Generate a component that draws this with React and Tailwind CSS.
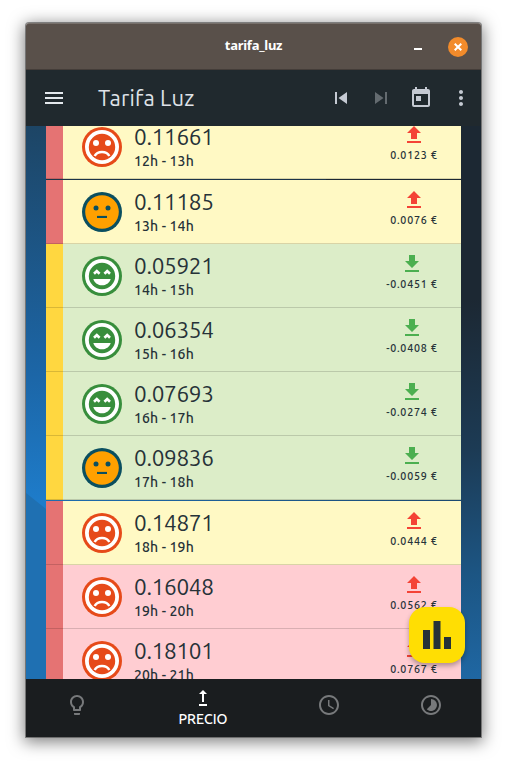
import { MdMenu, MdSkipPrevious, MdSkipNext, MdToday, MdMoreVert, MdLightbulbOutline, MdAccessTime, MdTimelapse } from "react-icons/md";

const HOURS = [
  { price: "0.11661", time: "12h - 13h", delta: "0.0123 €", face: "sad", up: true, strip: "bg-[#e57373]", bg: "bg-[#fff9c4]" },
  { price: "0.11185", time: "13h - 14h", delta: "0.0076 €", face: "neutral", up: true, strip: "bg-[#e57373]", bg: "bg-[#fff9c4]", gap: true },
  { price: "0.05921", time: "14h - 15h", delta: "-0.0451 €", face: "happy", strip: "bg-[#ffd740]", bg: "bg-[#dcedc8]" },
  { price: "0.06354", time: "15h - 16h", delta: "-0.0408 €", face: "happy", strip: "bg-[#ffd740]", bg: "bg-[#dcedc8]" },
  { price: "0.07693", time: "16h - 17h", delta: "-0.0274 €", face: "happy", strip: "bg-[#ffd740]", bg: "bg-[#dcedc8]" },
  { price: "0.09836", time: "17h - 18h", delta: "-0.0059 €", face: "neutral", strip: "bg-[#ffd740]", bg: "bg-[#dcedc8]" },
  { price: "0.14871", time: "18h - 19h", delta: "0.0444 €", face: "sad", up: true, strip: "bg-[#e57373]", bg: "bg-[#fff9c4]", gap: true },
  { price: "0.16048", time: "19h - 20h", delta: "0.0562 €", face: "sad", up: true, strip: "bg-[#e57373]", bg: "bg-[#ffcdd2]" },
  { price: "0.18101", time: "20h - 21h", delta: "0.0767 €", face: "sad", up: true, strip: "bg-[#e57373]", bg: "bg-[#ffcdd2]" },
];

function Face({ type }) {
  if (type === "neutral") {
    return (
      <svg className="size-10 shrink-0" viewBox="-20 -20 40 40">
        <circle r="20" fill="#0a4f60" />
        <circle r="16.8" fill="#ffa000" />
        <circle cx="-6" cy="-4" r="2.5" fill="#0a4f60" />
        <circle cx="6" cy="-4" r="2.5" fill="#0a4f60" />
        <rect x="-5" y="3.9" width="10" height="2.1" fill="#0a4f60" />
      </svg>
    );
  }
  const color = type === "sad" ? "#e64a19" : "#388e3c";
  return (
    <svg className="size-10 shrink-0" viewBox="-20 -20 40 40">
      <circle r="20" fill={color} />
      <circle r="17" fill="#fff" />
      <circle r="13.2" fill={color} />
      {type === "sad" ? (
        <>
          <circle cx="-6" cy="-4" r="3" fill="#fff" />
          <circle cx="6" cy="-4" r="3" fill="#fff" />
          <path d="M-7.3 9C-4.6 3.6 4.6 3.6 7.3 9" fill="none" stroke="#fff" strokeWidth="2.6" />
        </>
      ) : (
        <>
          <path d="M-8.9-3.2-5.2-6.7-1.5-3.2-3.3-1.2-5.2-3-7.1-1.2ZM1.5-3.2 5.2-6.7 8.9-3.2 7.1-1.2 5.2-3 3.3-1.2Z" fill="#fff" />
          <path d="M-8.7 3H8.7C7.4 7 4 9.3 0 9.3S-7.4 7-8.7 3Z" fill="#fff" />
        </>
      )}
    </svg>
  );
}

function Trend({ up }) {
  return (
    <svg className={up ? "size-6 text-[#f44336]" : "size-6 text-[#4caf50]"} viewBox="0 0 24 24" fill="currentColor">
      <path d={up ? "M9 16V10H5L12 3L19 10H15V16H9M5 20V18H19V20H5Z" : "M5 20H19V18H5V20M19 9H15V3H9V9H5L12 16L19 9Z"} />
    </svg>
  );
}

function Row({ item }) {
  return (
    <div className={item.gap ? "mt-px flex h-16 shrink-0" : "flex h-16 shrink-0"}>
      <div className={`w-[17px] border-b border-black/15 ${item.strip}`} />
      <div className={`flex flex-1 justify-between border-b border-black/15 pl-[19px] pr-[23.5px] ${item.bg}`}>
        <div className="flex pt-3">
          <Face type={item.face} />
          <div className="-mt-0.5 ml-3 text-[#263238]">
            <div className="h-6 whitespace-nowrap text-[22.5px] leading-6 tracking-[-0.3px]">{item.price}</div>
            <div className="mt-[2px] h-5 whitespace-nowrap text-[14px] font-medium leading-5 tracking-[0.15px]">{item.time}</div>
          </div>
        </div>
        <div className="flex flex-col items-center pt-2">
          <Trend up={item.up} />
          <div className="whitespace-nowrap text-[10.7px] font-medium leading-4 tracking-[0.75px] text-[#263238]">{item.delta}</div>
        </div>
      </div>
    </div>
  );
}

function Wallpaper() {
  return (
    <svg className="absolute inset-0 h-full w-full" viewBox="0 0 455 553" preserveAspectRatio="none">
      <defs>
        <linearGradient id="left" x1="0" y1="0" x2="0" y2="1">
          <stop offset="0" stopColor="#1d4565" />
          <stop offset="0.45" stopColor="#1c66a7" />
          <stop offset="0.68" stopColor="#1e7cca" />
          <stop offset="1" stopColor="#1e7cca" />
        </linearGradient>
        <linearGradient id="right" gradientUnits="userSpaceOnUse" x1="400" y1="180" x2="455" y2="553">
          <stop offset="0" stopColor="#1c2833" />
          <stop offset="0.4" stopColor="#1c3b55" />
          <stop offset="0.72" stopColor="#1c5583" />
          <stop offset="1" stopColor="#1f67a3" />
        </linearGradient>
        <linearGradient id="gap" x1="0" y1="0" x2="1" y2="0">
          <stop offset="0" stopColor="#1e6eb0" />
          <stop offset="1" stopColor="#1c4a70" />
        </linearGradient>
      </defs>
      <path d="M0 0H455V553H0Z" fill="url(#left)" />
      <path d="M20 0H455V553H20Z" fill="url(#right)" />
      <path d="M20 0H300V60H20Z" fill="#1c3448" />
      <path d="M20 370H435V380H20Z" fill="url(#gap)" />
      <path d="M0 367 20 383V553H0Z" fill="#1f70b2" />
    </svg>
  );
}

export default function App() {
  return (
    <div className="h-[766px] w-[507px] overflow-hidden bg-white pl-[26px] pt-[23px] font-['Ubuntu','Noto_Sans',sans-serif]">
      <div className="flex h-[714px] w-[455px] flex-col rounded-t-[3px] shadow-[0_0_0_1px_rgba(75,75,75,0.6),0_3px_16px_2px_rgba(0,0,0,0.5)]">
        <header className="flex h-[47px] shrink-0 items-center rounded-t-[3px] border-b border-t border-b-[#443d39] border-t-[#77706b] bg-[#59504a] pr-[13px]">
          <h1 className="-mt-0.5 flex-1 pl-[67px] text-center font-['Noto_Sans'] text-[13px] font-bold tracking-[-0.25px] text-white">tarifa_luz</h1>
          <div className="mr-[26px] mt-[5px] h-0.5 w-2 bg-white" />
          <div className="flex size-5 items-center justify-center rounded-full bg-[#f28b2b]">
            <svg className="size-2" viewBox="0 0 8 8" stroke="#fff" strokeWidth="2">
              <path d="M.7.7 7.3 7.3M7.3.7.7 7.3" />
            </svg>
          </div>
        </header>
        <nav className="flex h-14 shrink-0 items-center bg-[#20292e] pl-4 pr-2 text-[#c5cad3]">
          <MdMenu className="size-6 text-[#e3e8ed]" />
          <h2 className="ml-8 flex-1 whitespace-nowrap text-[22px] leading-7 tracking-[0.15px] text-[#dfe2e8]">Tarifa Luz</h2>
          <MdSkipPrevious className="mr-4 size-6" />
          <MdSkipNext className="mr-4 size-6 text-[#646b70]" />
          <MdToday className="mr-4 size-6" />
          <MdMoreVert className="size-6" />
        </nav>
        <main className="relative h-[553px] shrink-0">
          <Wallpaper />
          <div className="relative h-full overflow-hidden px-5">
            <div className="-mt-[11px] flex flex-col">
              {HOURS.map((h) => <Row key={h.time} item={h} />)}
            </div>
          </div>
          <button className="absolute bottom-4 right-4 flex size-14 items-center justify-center rounded-2xl bg-[#ffde03] shadow-[0_3px_5px_rgba(0,0,0,0.3)]">
            <svg className="h-7 w-7" viewBox="0 0 28 28" fill="#263238">
              <path d="M0 9H7V28H0ZM10.5 0H17.5V28H10.5ZM21 16H28V28H21Z" />
            </svg>
          </button>
        </main>
        <footer className="flex h-[58px] shrink-0 bg-[#1a1d1f] text-[#77797b]">
          <div className="flex w-[101px] justify-center pt-[14px]"><MdLightbulbOutline className="size-6" /></div>
          <div className="flex w-[152px] flex-col items-center pt-[11px] text-white">
            <svg className="h-4 w-2" viewBox="0 0 8 16" fill="currentColor">
              <path d="M4 0 8 4H5V12H3V4H0ZM0 14H8V16H0Z" />
            </svg>
            <span className="mt-[3px] text-[14px] font-medium leading-5">PRECIO</span>
          </div>
          <div className="flex w-[101px] justify-center pr-px pt-[14px]"><MdAccessTime className="size-6" /></div>
          <div className="flex w-[101px] justify-center pt-[14px]"><MdTimelapse className="size-6" /></div>
        </footer>
      </div>
    </div>
  );
}
